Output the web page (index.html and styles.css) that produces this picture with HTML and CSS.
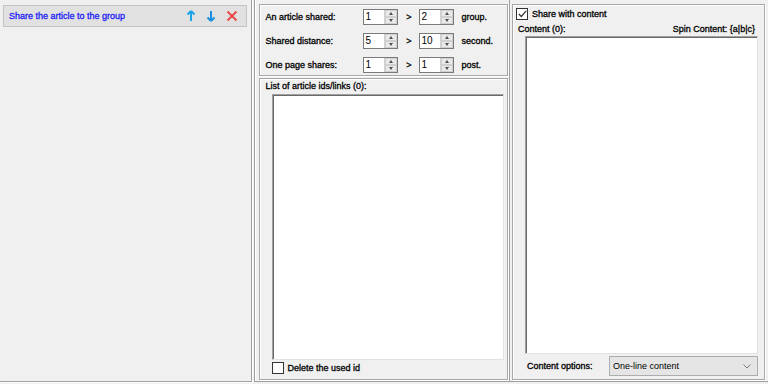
FILE: index.html
```html
<!DOCTYPE html>
<html>
<head>
<meta charset="utf-8">
<link rel="stylesheet" href="styles.css">
</head>
<body>
<div class="app">
  <div class="left">
    <div class="task">
      <span class="task-title">Share the article to the group</span>
      <span class="task-icons">
        <svg class="ic" width="10" height="12" viewBox="0 0 10 12"><path d="M5 1 L1.5 4.5 M5 1 L8.5 4.5 M5 1 V11" stroke="#1aa3e8" stroke-width="2" fill="none"/></svg>
        <svg class="ic" width="10" height="12" viewBox="0 0 10 12"><path d="M5 11 L1.5 7.5 M5 11 L8.5 7.5 M5 11 V1" stroke="#1a8fe0" stroke-width="2" fill="none"/></svg>
        <svg class="ic" width="12" height="12" viewBox="0 0 12 12"><path d="M1.5 1.5 L10.5 10.5 M10.5 1.5 L1.5 10.5" stroke="#f04a4a" stroke-width="2" fill="none"/></svg>
      </span>
    </div>
  </div>
  <div class="middle">
    <div class="group settings">
      <div class="row">
        <span class="lbl">An article shared:</span>
        <span class="spin"><span class="val">1</span><span class="btns"><i class="up"></i><i class="dn"></i></span></span>
        <span class="gt">&gt;</span>
        <span class="spin"><span class="val">2</span><span class="btns"><i class="up"></i><i class="dn"></i></span></span>
        <span class="unit">group.</span>
      </div>
      <div class="row">
        <span class="lbl">Shared distance:</span>
        <span class="spin"><span class="val">5</span><span class="btns"><i class="up"></i><i class="dn"></i></span></span>
        <span class="gt">&gt;</span>
        <span class="spin"><span class="val">10</span><span class="btns"><i class="up"></i><i class="dn"></i></span></span>
        <span class="unit">second.</span>
      </div>
      <div class="row">
        <span class="lbl">One page shares:</span>
        <span class="spin"><span class="val">1</span><span class="btns"><i class="up"></i><i class="dn"></i></span></span>
        <span class="gt">&gt;</span>
        <span class="spin"><span class="val">1</span><span class="btns"><i class="up"></i><i class="dn"></i></span></span>
        <span class="unit">post.</span>
      </div>
    </div>
    <div class="group list">
      <div class="list-title">List of article ids/links (0):</div>
      <div class="textbox list-box"></div>
      <label class="check-row del"><span class="cb"></span>Delete the used id</label>
    </div>
  </div>
  <div class="right">
    <div class="group content">
      <label class="check-row share"><span class="cb checked"><svg width="9" height="8" viewBox="0 0 9 8"><path d="M0.8 4 L3.3 6.5 L8.2 0.8" stroke="#333" stroke-width="1.2" fill="none"/></svg></span>Share with content</label>
      <div class="content-head"><span>Content (0):</span><span>Spin Content: {a|b|c}</span></div>
      <div class="textbox content-box"></div>
      <div class="opts">
        <span class="opts-lbl">Content options:</span>
        <span class="select"><span>One-line content</span><svg width="8" height="5" viewBox="0 0 8 5"><path d="M0.5 0.5 L4 4 L7.5 0.5" stroke="#7a7a7a" fill="none"/></svg></span>
      </div>
    </div>
  </div>
</div>
</body>
</html>
```

FILE: styles.css
```css
* { box-sizing: border-box; }
html, body { margin: 0; padding: 0; }
body {
  width: 768px; height: 384px; overflow: hidden;
  background: #f0f0f0;
  font-family: "Liberation Sans", Arial, sans-serif;
  font-size: 9px;
  color: #000;
  white-space: nowrap;
}
.app { display: flex; height: 382px; }
.left {
  width: 252px; height: 382px;
  border-right: 1px solid #a0a0a0;
  border-bottom: 1px solid #a0a0a0;
  box-shadow: 1px 1px 0 #fff;
  padding: 5px 4px 0 3px;
}
.task {
  height: 22px;
  background: #e1e1e1;
  border: 1px solid #c4c4c4;
  display: flex; align-items: center; justify-content: space-between;
  padding: 0 8px 0 5px;
}
.task-title { color: #2020f8; -webkit-text-stroke: 0.3px #2020f8; }
.task-icons { display: flex; gap: 10px; align-items: center; }
.ic { display: block; }

.middle {
  width: 257px; height: 382px;
  margin-left: 2px;
  border-left: 1px solid #a0a0a0;
  border-bottom: 1px solid #a0a0a0;
  border-right: 1px solid #a0a0a0;
  box-shadow: inset 1px 0 0 #fff;
  padding: 4px 1px 0 4px;
  display: flex; flex-direction: column; gap: 2px;
}
.group {
  border: 1px solid #a8a8a8;
  box-shadow: inset 1px 1px 0 #fff, 1px 1px 0 #fff;
}
.settings {
  height: 72px;
  padding: 4px 0 0 6px;
  display: flex; flex-direction: column; gap: 8px;
}
.row, .list-title, .check-row, .content-head, .opts-lbl { -webkit-text-stroke: 0.3px #000; }
.row { display: flex; align-items: center; height: 16px; }
.lbl { width: 97px; }
.spin {
  width: 35px; height: 16px;
  background: #fff;
  border: 1px solid #7a7a7a;
  display: flex; justify-content: space-between;
  -webkit-text-stroke: 0;
  font-size: 10px;
}
.val { padding-left: 2px; line-height: 14px; }
.btns {
  width: 13px; display: flex; flex-direction: column;
  border-left: 1px solid #d0d0d0;
  background: #e9e9e9;
}
.btns i {
  flex: 1; position: relative; display: block;
  border: 1px solid #cfcfcf;
}
.btns i::after {
  content: ""; position: absolute; left: 3px; top: 1px;
  border-left: 2.5px solid transparent; border-right: 2.5px solid transparent;
}
.btns .up::after { border-bottom: 3px solid #505050; }
.btns .dn::after { border-top: 3px solid #505050; }
.gt { width: 21px; text-align: center; padding-left: 2px; }
.unit { margin-left: 8px; }

.list {
  height: 302px;
  padding: 1px 3px 0 6px;
  display: flex; flex-direction: column;
}
.list-title { height: 13px; line-height: 13px; }
.textbox {
  background: #fff;
  border: 1px solid #a0a0a0;
  border-right-color: #e3e3e3; border-bottom-color: #e3e3e3;
  box-shadow: inset 1px 1px 0 #696969;
}
.list-box { height: 266px; margin: 1px 0 0 6px; }
.check-row { display: flex; align-items: center; }
.cb {
  width: 12px; height: 12px;
  border: 1px solid #333;
  background: #fff;
  margin-right: 4px;
  display: flex; align-items: center; justify-content: center;
}
.del { margin: 2px 0 0 6px; }

.right {
  flex: 1; height: 382px;
  padding: 4px 3px 0 2px;
  border-bottom: 1px solid #a0a0a0;
}
.content {
  height: 376px;
  padding: 3px 6px 0 3px;
  display: flex; flex-direction: column;
}
.content-head {
  display: flex; justify-content: space-between;
  margin: 1px 3px 0 2px; height: 15px; line-height: 16px;
}
.content-box { height: 318px; margin: 0 0 0 9px; }
.opts { display: flex; align-items: center; margin: 2px 0 0 11px; }
.opts-lbl { width: 82px; }
.select {
  width: 149px; height: 20px;
  background: #e5e5e5;
  border: 1px solid #adadad;
  display: flex; align-items: center; justify-content: space-between;
  padding: 0 6px 0 3px;
}
```
